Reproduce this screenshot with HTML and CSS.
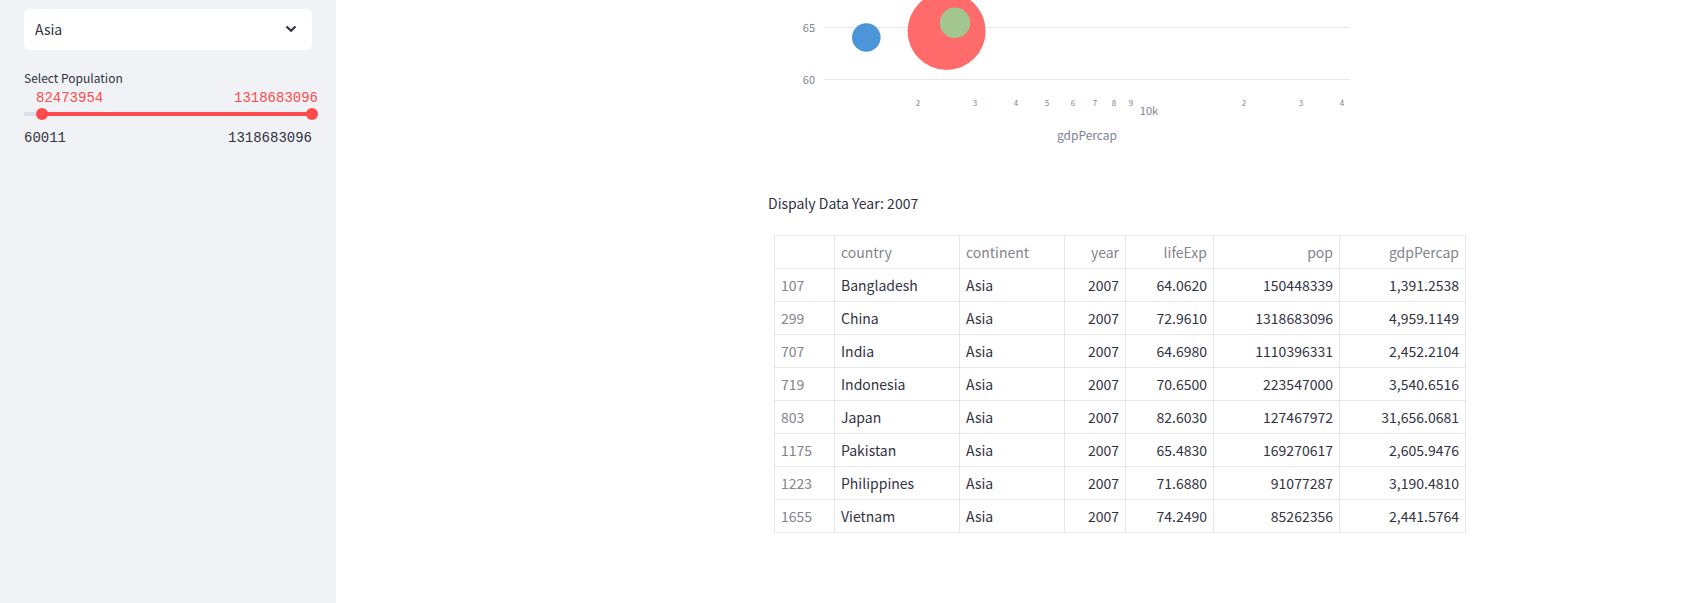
FILE: index.html
```html
<!DOCTYPE html>
<html lang="en">
<head>
<meta charset="utf-8">
<title>Population data</title>
<link rel="stylesheet" href="styles.css">
</head>
<body>
<div class="app">
  <aside class="sidebar">
    <div class="select-box">
      <select class="select" aria-label="Continent">
        <option>Asia</option>
      </select>
      <svg class="chevron" viewBox="0 0 12 8" width="12" height="8" aria-hidden="true"><path d="M1.5 1.5 L6 5.8 L10.5 1.5" fill="none" stroke="currentColor" stroke-width="2.2"/></svg>
    </div>
    <div class="slider" role="group" aria-labelledby="pop-label">
      <label class="slider-label" id="pop-label" for="pop-min">Select Population</label>
      <div class="slider-values"><output for="pop-min">82473954</output><output for="pop-max">1318683096</output></div>
      <div class="slider-track">
        <input class="range" id="pop-min" type="range" min="60011" max="1318683096" value="82473954">
        <input class="range" id="pop-max" type="range" min="60011" max="1318683096" value="1318683096" aria-label="Maximum population">
      </div>
      <div class="slider-limits"><span>60011</span><span>1318683096</span></div>
    </div>
  </aside>
  <main class="main">
    <section class="results">
      <svg class="chart" viewBox="0 0 640 168" width="640" height="168" role="img" aria-label="Life expectancy by gdpPercap">
        <g class="grid"><path d="M56 27.5H582M56 79.5H582"/></g>
        <g class="bubbles">
          <circle cx="98.3" cy="37.5" r="14.3" fill="#388ad5"/>
          <circle cx="178.6" cy="31" r="39" fill="#ff5a5a"/>
          <circle cx="187" cy="22.8" r="15.2" fill="#99d095"/>
        </g>
        <g class="tick y-tick"><text x="47" y="32">65</text><text x="47" y="84">60</text></g>
        <g class="minor">
          <text x="150" y="106">2</text><text x="207" y="106">3</text><text x="248" y="106">4</text><text x="279" y="106">5</text><text x="305" y="106">6</text><text x="327" y="106">7</text><text x="346" y="106">8</text><text x="363" y="106">9</text>
          <text x="476" y="106">2</text><text x="533" y="106">3</text><text x="574" y="106">4</text>
        </g>
        <text class="tick x-tick" x="381" y="115">10k</text>
        <text class="axis-title" x="319" y="140">gdpPercap</text>
      </svg>
      <p class="caption">Dispaly Data Year: 2007</p>
      <table class="data">
        <colgroup><col class="c-index"><col class="c-country"><col class="c-continent"><col class="c-year"><col class="c-life"><col class="c-wide"><col class="c-wide"></colgroup>
        <thead><tr><th></th><th>country</th><th>continent</th><th class="num">year</th><th class="num">lifeExp</th><th class="num">pop</th><th class="num">gdpPercap</th></tr></thead>
        <tbody>
          <tr><th>107</th><td>Bangladesh</td><td>Asia</td><td class="num">2007</td><td class="num">64.0620</td><td class="num">150448339</td><td class="num">1,391.2538</td></tr>
          <tr><th>299</th><td>China</td><td>Asia</td><td class="num">2007</td><td class="num">72.9610</td><td class="num">1318683096</td><td class="num">4,959.1149</td></tr>
          <tr><th>707</th><td>India</td><td>Asia</td><td class="num">2007</td><td class="num">64.6980</td><td class="num">1110396331</td><td class="num">2,452.2104</td></tr>
          <tr><th>719</th><td>Indonesia</td><td>Asia</td><td class="num">2007</td><td class="num">70.6500</td><td class="num">223547000</td><td class="num">3,540.6516</td></tr>
          <tr><th>803</th><td>Japan</td><td>Asia</td><td class="num">2007</td><td class="num">82.6030</td><td class="num">127467972</td><td class="num">31,656.0681</td></tr>
          <tr><th>1175</th><td>Pakistan</td><td>Asia</td><td class="num">2007</td><td class="num">65.4830</td><td class="num">169270617</td><td class="num">2,605.9476</td></tr>
          <tr><th>1223</th><td>Philippines</td><td>Asia</td><td class="num">2007</td><td class="num">71.6880</td><td class="num">91077287</td><td class="num">3,190.4810</td></tr>
          <tr><th>1655</th><td>Vietnam</td><td>Asia</td><td class="num">2007</td><td class="num">74.2490</td><td class="num">85262356</td><td class="num">2,441.5764</td></tr>
        </tbody>
      </table>
    </section>
  </main>
</div>
</body>
</html>
```
FILE: styles.css
```css
* { box-sizing: border-box; }
body {
  margin: 0;
  background: #fff;
  color: #31333f;
  font: 14px/24px "Noto Sans CJK SC", "Noto Sans", sans-serif;
}
.app { display: flex; min-height: 100vh; }

/* Sidebar */
.sidebar { flex: 0 0 336px; padding: 9px 24px; background: #f0f2f6; }
.select-box { display: grid; align-items: center; }
.select, .chevron { grid-area: 1 / 1; }
.select {
  appearance: none;
  width: 100%;
  height: 41px;
  padding: 0 36px 2px 11px;
  border: 0;
  border-radius: 6px;
  background: #fff;
  color: inherit;
  font: inherit;
}
.chevron { justify-self: end; margin: 0 15px 1px 0; pointer-events: none; }
.slider { margin-top: 18px; }
.slider-label { display: block; font-size: 12px; line-height: 20px; }
.slider-values, .slider-limits {
  display: flex;
  justify-content: space-between;
  font: 14px/20px "Liberation Mono", monospace;
}
.slider-values { margin-right: -6px; padding-left: 12px; color: #ff4b4b; }
.slider-track {
  display: grid;
  height: 12px;
  margin: 0 -6px;
  background:
    linear-gradient(#ff4b4b, #ff4b4b) 24px 4px / calc(100% - 30px) 4px no-repeat,
    linear-gradient(#dce0ea, #dce0ea) 6px 4px / calc(100% - 12px) 4px no-repeat;
}
.range {
  grid-area: 1 / 1;
  appearance: none;
  width: 100%;
  height: 12px;
  margin: 0;
  background: transparent;
  pointer-events: none;
}
.range::-webkit-slider-thumb {
  appearance: none;
  width: 12px;
  height: 12px;
  border-radius: 50%;
  background: #ff4b4b;
  pointer-events: auto;
}
.slider-limits { margin-top: 8px; }

/* Main column */
.main {
  flex: 1;
  min-width: 0;
  display: grid;
  grid-template-columns: 336px minmax(0, 1fr);
  gap: 16px;
  padding: 0 80px;
}
.results { grid-column: 2; }
.chart { display: block; max-width: 100%; }
.grid path { stroke: #e3e6ed; }
.bubbles circle { fill-opacity: .9; }
.chart text { fill: #808495; text-anchor: middle; }
.chart .y-tick text { text-anchor: end; }
.tick { font-size: 11px; }
.minor { font-size: 8px; }
.chart .axis-title { font-size: 12px; }
.caption { margin: 23px 0 20px; }

.data { margin-left: 6px; table-layout: fixed; border-collapse: collapse; width: 691px; }
.c-index { width: 60px; }
.c-country { width: 125px; }
.c-wide { width: 126px; }
.c-continent { width: 105px; }
.c-year { width: 61px; }
.c-life { width: 88px; }
.data th, .data td {
  height: 33px;
  padding: 0 6px;
  border: 1px solid #e6e6e8;
  text-align: left;
}
.data th { color: #83848c; font-weight: 400; }
.data .num { text-align: right; }
```
